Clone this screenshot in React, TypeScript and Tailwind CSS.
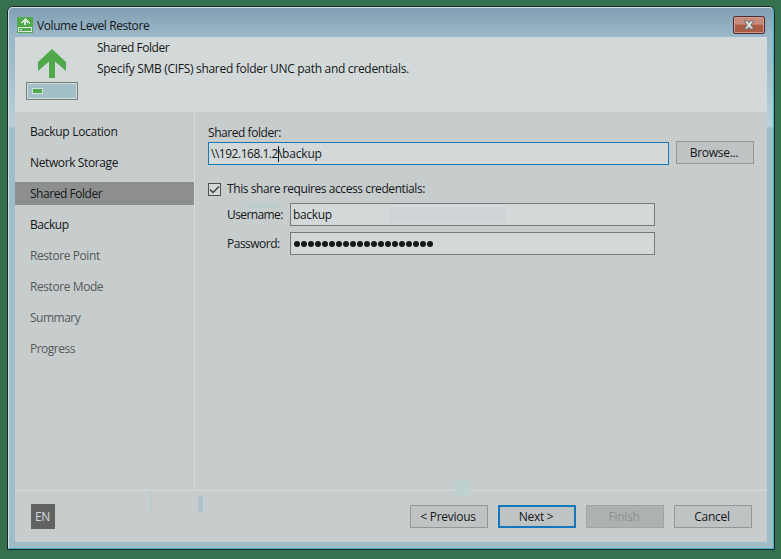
import type { ReactNode } from "react";

const steps = [
  { label: "Backup Location", state: "done", tracking: "tracking-[-0.3px]" },
  { label: "Network Storage", state: "done", tracking: "tracking-[-0.38px]" },
  { label: "Shared Folder", state: "active", tracking: "tracking-[-0.46px]" },
  { label: "Backup", state: "done", tracking: "tracking-[-0.4px]" },
  { label: "Restore Point", state: "todo", tracking: "tracking-[-0.42px]" },
  { label: "Restore Mode", state: "todo", tracking: "tracking-[-0.42px]" },
  { label: "Summary", state: "todo", tracking: "tracking-[-0.5px]" },
  { label: "Progress", state: "todo", tracking: "tracking-[-0.5px]" },
];

function TitleIcon() {
  return (
    <svg width="16" height="16" viewBox="0 0 16 16" shapeRendering="crispEdges">
      <rect width="16" height="16" fill="#50a94b" />
      <path d="M8 1L12.5 5.5V7L9 4.5V8H7V4.5L3.5 7V5.5Z" fill="#dde8dc" />
      <rect x="1.5" y="10.5" width="13" height="4" fill="#50a94b" stroke="#dde8dc" />
      <rect x="3" y="12" width="2" height="1" fill="#dde8dc" />
    </svg>
  );
}

function RestoreIcon() {
  return (
    <svg width="52" height="52" viewBox="0 0 52 52">
      <path d="M26 1L40 14V23L29 13.5V30H23V13.5L12 23V14Z" fill="#50a94b" />
      <g shapeRendering="crispEdges">
        <rect x="0.5" y="34.5" width="51" height="17" fill="#d5dadb" stroke="#777b7c" />
        <rect x="2" y="36" width="48" height="14" fill="#a2bfca" />
        <rect x="6.5" y="40.5" width="10" height="5" fill="#50a94b" stroke="#d5dfdb" />
      </g>
    </svg>
  );
}

function CloseButton() {
  return (
    <button className="flex h-[18px] w-8 items-center justify-center rounded-[2px] border border-[#4c2d35] bg-linear-to-b from-[#c78b7b] from-45% to-[#ad5c44] to-50% shadow-[inset_0_0_0_1px_#d09b8c]">
      <svg width="12" height="10" viewBox="0 0 12 10">
        <path d="M1 .8H4.2L6 2.8L7.8 .8H11L7.8 5L11 9.2H7.8L6 7.2L4.2 9.2H1L4.2 5Z" fill="#dce2e2" stroke="#555e66" strokeWidth="0.8" />
      </svg>
    </button>
  );
}

function Button({ children, kind = "normal" }: { children: ReactNode; kind?: "normal" | "primary" | "disabled" }) {
  const style =
    kind === "primary"
      ? "border-2 border-[#1476bb] bg-[#bfc3c4] text-[#151819]"
      : kind === "disabled"
        ? "border border-[#a0a4a4] bg-[#adb1b2] text-[#8b918c]"
        : "border border-[#939797] bg-[#bfc3c4] text-[#151819]";
  return (
    <button className={`flex h-[23px] w-[78px] items-center justify-center pr-[2px] tracking-[-0.28px] ${style}`}>
      <span>{children}</span>
    </button>
  );
}

export default function App() {
  return (
    <div className="h-[559px] w-[781px] overflow-hidden bg-[#35704f] pt-1.5 pl-[7px] font-['Open_Sans','Noto_Sans',sans-serif] text-[12px] leading-4 tracking-[-0.42px] text-[#151819]">
      <div className="h-[544px] w-[768px] rounded-t-[6px] border border-[#17282a] bg-[#9fbdc8]">
        <div className="flex h-full flex-col rounded-t-[5px] border border-t-[#d5e1e3] border-r-[#43b5c5] border-b-[#43b5c5] border-l-[#d5dfe1] bg-[linear-gradient(to_bottom,#829fb3_0px,#9ab8c9_28px,#a2becb_60px,#bbd0d8_118px,#9fbdc8_120px)] px-1.5 pb-1.5">
          <header className="flex h-[29px] shrink-0 justify-between pr-[2px] pl-[2px]">
            <div className="flex items-start pt-[9px]">
              <TitleIcon />
              <h1 className="mt-px ml-1">Volume Level Restore</h1>
            </div>
            <div className="pt-2"><CloseButton /></div>
          </header>

          <main className="flex min-h-0 flex-1 flex-col bg-[#c7cccd]">
            <section className="flex h-[75px] shrink-0 bg-[#d3d8d9] pl-[11px]">
              <div className="pt-[11px]"><RestoreIcon /></div>
              <div className="ml-[19px] pt-[3px]">
                <h2 className="tracking-[-0.46px]">Shared Folder</h2>
                <p className="mt-[5px] tracking-[-0.3px]">Specify SMB (CIFS) shared folder UNC path and credentials.</p>
              </div>
            </section>

            <div className="flex h-[378px] shrink-0">
              <nav className="flex w-[180px] flex-col gap-2 border-r border-[#d6dadb] pt-2">
                {steps.map((step) => (
                  <div
                    key={step.label}
                    className={`flex h-[23px] items-center pl-[15px] ${step.tracking} ${step.state === "active" ? "bg-[#8d8f8f]" : ""} ${step.state === "todo" ? "text-[#555b59]" : ""}`}
                  >
                    {step.label}
                  </div>
                ))}
              </nav>

              <form className="relative pt-[13px] pl-[13px]">
                <div className="absolute top-[91px] left-[52px] h-[5px] w-8 bg-[#bccccd]" />
                <label className="block tracking-[-0.45px]">Shared folder:</label>
                <div className="flex gap-[7px]">
                  <div className="mt-[1px] flex h-[23px] w-[461px] items-center border border-[#1778b8] bg-[#d3d8d9] pl-[2px]">
                    <span className="tracking-[-0.48px]">\\192.168.1.2</span>
                    <span className="-mr-px h-4 w-px bg-[#151819]" />
                    <span className="tracking-[-0.2px]">\backup</span>
                  </div>
                  <Button>Browse...</Button>
                </div>
                <div className="mt-[16px] flex items-center">
                  <span className="flex size-[13px] items-center justify-center border border-[#4b5050] bg-[#d3d8d9]">
                    <svg width="11" height="9" viewBox="0 0 11 9" fill="none">
                      <path d="M1 4.5L4 7.5L10 1.5" stroke="#353939" strokeWidth="1.3" />
                    </svg>
                  </span>
                  <span className="ml-1.5">This share requires access credentials:</span>
                </div>
                <div className="mt-[6px] ml-[19px] grid grid-cols-[63px_365px] gap-y-1.5">
                  <label className="flex items-center tracking-[-0.6px]">Username:</label>
                  <div className="flex h-[23px] items-center border border-[#747979] bg-[#d3d8d9] pl-[2px]">
                    <span className="tracking-[-0.35px]">backup</span>
                    <span className="ml-auto mr-[149px] h-4 w-[115px] bg-[#ced4d6]" />
                  </div>
                  <label className="flex items-center tracking-[-0.5px]">Password:</label>
                  <div className="flex h-[23px] items-center border border-[#747979] bg-[#d3d8d9] pl-[2.5px]">
                    <div className="flex gap-px">
                      {Array.from({ length: 20 }, (_, i) => (
                        <span key={i} className="size-1.5 rounded-full bg-[#151819]" />
                      ))}
                    </div>
                  </div>
                </div>
              </form>
            </div>

            <footer className="relative flex flex-1 items-start border-t border-[#d6dadb] pt-[14px] pr-[15px] pl-4">
              <div className="absolute -top-[11px] left-[439px] h-4 w-4 bg-[#bdd1cf]" />
              <div className="absolute top-0 left-[135px] h-[21px] w-px bg-[#aec5ce]" />
              <div className="absolute top-[5px] left-[183px] h-4 w-[5px] bg-[#b0c2cb]" />
              <span className="-mt-px flex h-[25px] w-6 items-center justify-center bg-[#616363] pr-px text-[#d0dbdc]">EN</span>
              <div className="ml-auto flex gap-[10px]">
                <Button>&lt; Previous</Button>
                <Button kind="primary">Next &gt;</Button>
                <Button kind="disabled">Finish</Button>
                <Button>Cancel</Button>
              </div>
            </footer>
          </main>
        </div>
      </div>
    </div>
  );
}
